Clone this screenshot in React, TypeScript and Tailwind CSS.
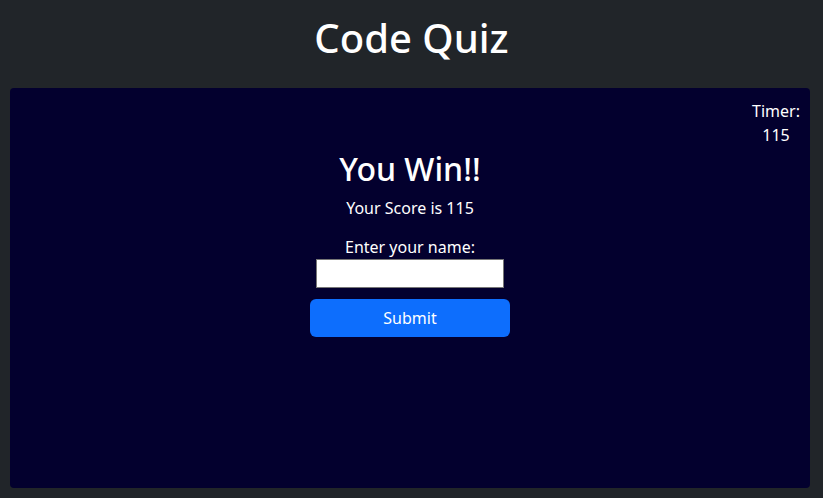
export default function App() {
  return (
    <div
      className="flex h-[498px] flex-col bg-[#212529] text-white"
      style={{ fontFamily: '"Noto Sans", "Open Sans", sans-serif' }}
    >
      <header className="flex h-[88px] items-center justify-center">
        <h1 className="pb-[12px] text-[40px] font-medium leading-[1.2]">Code Quiz</h1>
      </header>

      <main className="mb-[10px] ml-[10px] mr-[13px] flex flex-1 flex-col rounded-[4px] bg-[#03002e] px-[10px] pt-[11px]">
        <div className="flex justify-end">
          <div className="text-center text-[16px] leading-[24px]">
            <div>Timer:</div>
            <div>115</div>
          </div>
        </div>

        <section className="mt-[3px] flex flex-col items-center">
          <h2 className="mb-[8px] text-[32px] font-medium leading-[1.2]">You Win!!</h2>
          <p className="mb-[15px] text-[16px] leading-[24px]">Your Score is 115</p>
          <label className="text-[16px] leading-[24px]">Enter your name:</label>
          <input
            type="text"
            className="h-[29px] w-[188px] border border-[#767676] bg-white px-1 text-black"
          />
          <button
            type="button"
            className="mt-[11px] h-[38px] w-[200px] rounded-[6px] bg-[#0d6efd] text-[16px] text-white"
          >
            Submit
          </button>
        </section>
      </main>
    </div>
  );
}
